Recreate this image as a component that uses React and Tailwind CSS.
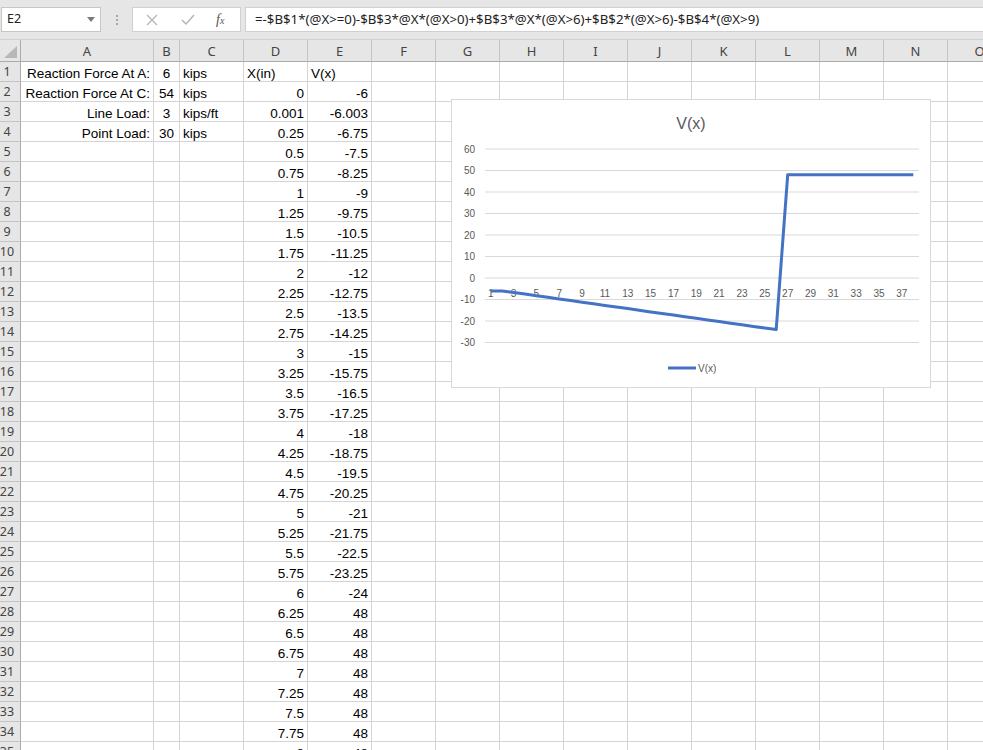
import React from "react";

const COLS = ["A", "B", "C", "D", "E", "F", "G", "H", "I", "J", "K", "L", "M", "N", "O"];

// shear along the beam, same formula as the sheet
const shear = (x) => -6 - 3 * x + (x > 6 ? 3 * x + 54 : 0) - (x > 9 ? 30 : 0);

const labels = {
  1: ["Reaction Force At A:", "6", "kips"],
  2: ["Reaction Force At C:", "54", "kips"],
  3: ["Line Load:", "3", "kips/ft"],
  4: ["Point Load:", "30", "kips"],
};

const buildRows = () => {
  const rows = [];
  for (let r = 1; r <= 35; r++) {
    const [a = "", b = "", c = ""] = labels[r] || [];
    let d = "";
    let e = "";
    if (r === 1) {
      d = "X(in)";
      e = "V(x)";
    } else if (r === 2) {
      d = "0";
      e = "-6";
    } else if (r === 3) {
      d = "0.001";
      e = "-6.003";
    } else {
      const x = 0.25 * (r - 3);
      d = String(x);
      e = String(shear(x));
    }
    rows.push({ r, a, b, c, d, e });
  }
  return rows;
};

// chart series: first two points are x=0 and x=0.001, then 0.25 steps up to 9
const series = () => {
  const pts = [-6, -6.003];
  for (let k = 3; k <= 38; k++) pts.push(shear(0.25 * (k - 2)));
  return pts;
};

const ShearChart = () => {
  const left = 33;
  const step = 434 / 38;
  const cx = (i) => left + (i - 0.5) * step;
  const cy = (v) => 178 - v * 2.15;
  const data = series();
  const path = data.map((v, i) => `${cx(i + 1).toFixed(1)},${cy(v).toFixed(1)}`).join(" ");
  const ticks = [60, 50, 40, 30, 20, 10, 0, -10, -20, -30];
  const cats = [];
  for (let k = 1; k <= 37; k += 2) cats.push(k);

  return (
    <div className="absolute left-[451px] top-[99px] w-[480px] h-[289px] bg-white border border-[#d9d9d9]">
      <svg width="478" height="287" className="block" style={{ fontFamily: "'Liberation Sans', Arial, sans-serif" }}>
        <text x="239" y="28.5" textAnchor="middle" fontSize="16" fill="#595959">V(x)</text>
        {ticks.map((t) => (
          <g key={t}>
            <line x1="33" x2="467" y1={cy(t)} y2={cy(t)} stroke="#d9d9d9" strokeWidth="1" />
            <text x="23" y={cy(t) + 3.5} textAnchor="end" fontSize="10" fill="#595959">{t}</text>
          </g>
        ))}
        {cats.map((k) => (
          <text key={k} x={cx(k)} y="196.5" textAnchor="middle" fontSize="10" fill="#595959">{k}</text>
        ))}
        <polyline points={path} fill="none" stroke="#4472c4" strokeWidth="3" strokeLinejoin="round" />
        <line x1="216" x2="244" y1="268" y2="268" stroke="#4472c4" strokeWidth="3" />
        <text x="246" y="271.5" fontSize="10" fill="#595959">V(x)</text>
      </svg>
    </div>
  );
};

const FormulaBar = () => (
  <div className="h-[40px] bg-[#e6e6e6] flex items-start pt-[7px] border-b border-[#d0d0d0]" style={{ fontFamily: "'Noto Sans', 'Open Sans', sans-serif" }}>
    <div className="ml-[1px] w-[100px] h-[25px] bg-white border border-[#c6c6c6] flex items-center justify-between pl-[5px] pr-[5px] text-[12.5px] text-[#222]">
      <span>E2</span>
      <svg width="8" height="5" viewBox="0 0 8 5"><path d="M0 0 L8 0 L4 5 Z" fill="#7a7a7a" /></svg>
    </div>
    <div className="w-[31px] h-[25px] flex flex-col items-center justify-center gap-[2px]">
      <span className="w-[2px] h-[2px] bg-[#a8a8a8]" />
      <span className="w-[2px] h-[2px] bg-[#a8a8a8]" />
      <span className="w-[2px] h-[2px] bg-[#a8a8a8]" />
    </div>
    <div className="w-[109px] h-[25px] bg-white border border-[#d0d0d0] flex items-center">
      <svg width="12" height="12" viewBox="0 0 12 12" className="ml-[13px]">
        <path d="M1 1 L11 11 M11 1 L1 11" stroke="#b5b5b5" strokeWidth="1.3" />
      </svg>
      <svg width="14" height="12" viewBox="0 0 14 12" className="ml-[23px]">
        <path d="M1 6 L5 10 L13 1" stroke="#b5b5b5" strokeWidth="1.5" fill="none" />
      </svg>
      <span className="ml-[21px] text-[14px] italic text-[#555]" style={{ fontFamily: "'Liberation Serif', serif" }}>
        f<span className="text-[10px]">x</span>
      </span>
    </div>
    <div className="ml-[4px] flex-1 h-[25px] bg-white border border-r-0 border-[#d0d0d0] flex items-center pl-[9px] text-[13.25px] text-[#222] whitespace-nowrap">
      =-$B$1*(@X&gt;=0)-$B$3*@X*(@X&gt;0)+$B$3*@X*(@X&gt;6)+$B$2*(@X&gt;6)-$B$4*(@X&gt;9)
    </div>
  </div>
);

const cellBase = "h-[20px] border-r border-b border-[#d4d4d4] flex items-end px-[3px] leading-[15px] overflow-hidden whitespace-nowrap";

export default function App() {
  const rows = buildRows();

  return (
    <div className="relative w-[983px] h-[750px] overflow-hidden bg-white">
      <FormulaBar />

      <div className="grid grid-cols-[21px_133px_26px_repeat(13,64px)]">
        {/* column headers */}
        <div className="h-[22px] bg-[#e6e6e6] border-r border-b border-[#ababab] flex items-end justify-end">
          <svg width="13" height="12" viewBox="0 0 13 12" className="mb-[3px] mr-[3px]">
            <path d="M13 0 L13 12 L0 12 Z" fill="#b8b8b8" />
          </svg>
        </div>
        {COLS.map((c) => (
          <div
            key={c}
            className="h-[22px] bg-[#e6e6e6] border-r border-b border-r-[#c4c4c4] border-b-[#ababab] flex items-center justify-center pt-[3px] text-[13px] text-[#444]"
            style={{ fontFamily: "'Noto Sans', 'Open Sans', sans-serif" }}
          >
            {c}
          </div>
        ))}

        {rows.map((row) => (
          <React.Fragment key={row.r}>
            <div
              className="h-[20px] bg-[#e6e6e6] border-r border-b border-r-[#ababab] border-b-[#c4c4c4] flex items-center justify-center pr-[6px] pt-[2px] text-[12.5px] text-[#444]"
              style={{ fontFamily: "'Noto Sans', 'Open Sans', sans-serif" }}
            >
              {row.r}
            </div>
            {COLS.map((c) => {
              let text = "";
              let align = "justify-start";
              if (c === "A") {
                text = row.a;
                align = "justify-end";
              } else if (c === "B") {
                text = row.b;
                align = "justify-center";
              } else if (c === "C") {
                text = row.c;
              } else if (c === "D") {
                text = row.d;
                align = row.r === 1 ? "justify-start" : "justify-end";
              } else if (c === "E") {
                text = row.e;
                align = row.r === 1 ? "justify-start" : "justify-end";
              }
              return (
                <div
                  key={c}
                  className={`${cellBase} ${align} text-[13.5px] text-black`}
                  style={{ fontFamily: "'Liberation Sans', Arial, sans-serif" }}
                >
                  {text}
                </div>
              );
            })}
          </React.Fragment>
        ))}
      </div>

      <ShearChart />
    </div>
  );
}
